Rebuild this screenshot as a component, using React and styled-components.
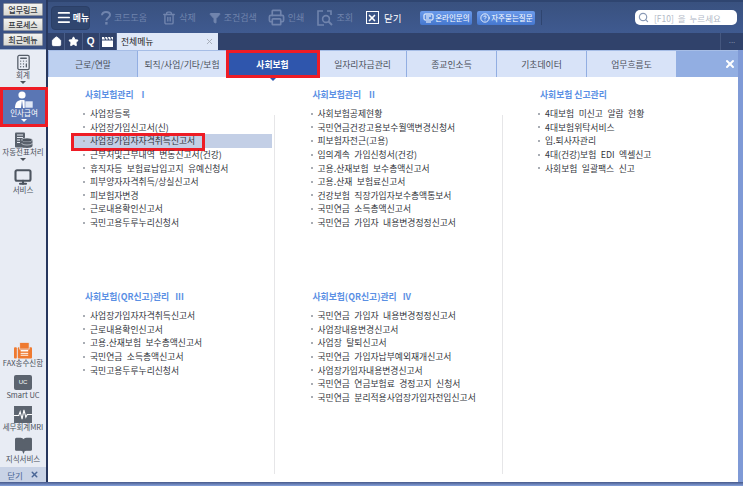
import React from "react";
import styled, { createGlobalStyle } from "styled-components";
import { Calculator, HelpCircle, Trash2, Filter, Printer, Search, X, Menu, Home, Star, Monitor, BookOpen } from "lucide-react";

const GlobalStyle = createGlobalStyle`
    html, body { margin: 0; padding: 0; background: #fff; }
    body { width: 743px; height: 486px; overflow: hidden; font-family: "Noto Sans CJK KR", "Noto Sans", sans-serif; }
`;

const groups = [
    [
        { title: "사회보험관리    I", items: ["사업장등록", "사업장가입신고서(신)", "사업장가입자자격취득신고서", "근부처및근부내역 변동신고서(건강)", "휴직자등 보험료납입고지 유예신청서", "피부양자자격취득/상실신고서", "피보험자변경", "근로내용확인신고서", "국민고용두루누리신청서"] },
        { title: "사회보험(QR신고)관리   III", items: ["사업장가입자자격취득신고서", "근로내용확인신고서", "고용.산재보험 보수총액신고서", "국민연금 소득총액신고서", "국민고용두루누리신청서"] },
    ],
    [
        { title: "사회보험관리    II", items: ["사회보험공제현황", "국민연금건강고용보수월액변경신청서", "피보험자전근(고용)", "임의계속 가입신청서(건강)", "고용.산재보험 보수총액신고서", "고용.산재 보험료신고서", "건강보험 직장가입자보수총액통보서", "국민연금 소득총액신고서", "국민연금 가입자 내용변경정정신고서"] },
        { title: "사회보험(QR신고)관리   IV", items: ["국민연금 가입자 내용변경정정신고서", "사업장내용변경신고서", "사업장 탈퇴신고서", "국민연금 가입자납부예외재개신고서", "사업장가입자내용변경신고서", "국민연금 연금보험료 경정고지 신청서", "국민연금 분리적용사업장가입자전입신고서"] },
    ],
    [
        { title: "사회보험 신고관리", items: ["4대보험 미신고 알람 현황", "4대보험위탁서비스", "입.퇴사자관리", "4대(건강)보험 EDI 엑셀신고", "사회보험 일괄팩스 신고"] },
    ],
];

const tabs = [
    { label: "근로/연말", w: 89, tone: "soft" },
    { label: "퇴직/사업/기타/보험", w: 89 },
    { label: "사회보험", w: 92, tone: "active" },
    { label: "일자리자금관리", w: 88 },
    { label: "종교인소득", w: 90 },
    { label: "기초데이터", w: 90 },
    { label: "업무흐름도", w: 90 },
];

function App() {
    return (
        <>
            <GlobalStyle />
            <Page>
                <Body>
                    <Side>
                        <QuickLinks>
                            <QuickButton>업무링크</QuickButton>
                            <QuickButton>프로세스</QuickButton>
                            <QuickButton>최근메뉴</QuickButton>
                        </QuickLinks>
                        <SideMenu>
                            <SideItem $gap={3}>
                                <Calculator size={17} strokeWidth={1.8} color="#555d68" />
                                <SideLabel>회계</SideLabel>
                                <Arrow />
                            </SideItem>
                            <SideItem $active $gap={5}>
                                <PersonIcon />
                                <SideLabel $active>인사급여</SideLabel>
                                <Arrow $active />
                            </SideItem>
                            <SideItem $gap={7}>
                                <LedgerIcon />
                                <SideLabel>자동전표처리</SideLabel>
                                <Arrow />
                            </SideItem>
                            <SideItem>
                                <Monitor size={18} strokeWidth={2.8} color="#4d5560" />
                                <SideLabel>서비스</SideLabel>
                            </SideItem>
                        </SideMenu>
                        <SideBottom>
                            <SideTool>
                                <FaxIcon />
                                <SideLabel>FAX송수신함</SideLabel>
                            </SideTool>
                            <SideTool>
                                <UcBadge>UC</UcBadge>
                                <SideLabel>Smart UC</SideLabel>
                            </SideTool>
                            <SideTool>
                                <MriIcon />
                                <SideLabel>세무회계MRI</SideLabel>
                            </SideTool>
                            <SideTool>
                                <BookOpen size={19} fill="#59616c" color="#59616c" strokeWidth={1.4} />
                                <SideLabel>지식서비스</SideLabel>
                            </SideTool>
                            <CloseBar>닫기 <X size={9} strokeWidth={4} color="#4a6696" /></CloseBar>
                        </SideBottom>
                    </Side>
                    <Main>
                        <Toolbar>
                            <MenuButton><Menu size={17} strokeWidth={2.6} color="#fff" />메뉴</MenuButton>
                            <ToolItem $ml={11}><QuestionIcon />코드도움</ToolItem>
                            <ToolItem $ml={15}><Trash2 size={14} strokeWidth={2.4} />삭제</ToolItem>
                            <ToolItem $ml={13}><Filter size={12} fill="#7084ad" />조건검색</ToolItem>
                            <ToolItem $ml={11}><Printer size={17} strokeWidth={2.4} />인쇄</ToolItem>
                            <ToolItem $ml={13}><LookupIcon />조회</ToolItem>
                            <CloseTool>
                                <CloseSquare><X size={10} strokeWidth={4} color="#fff" /></CloseSquare>
                                닫기
                            </CloseTool>
                            <LinkButton $ml={19} $w={52}><MonitorChat />온라인문의</LinkButton>
                            <LinkButton $ml={5} $w={58}><HelpCircle size={10} />자주묻는질문</LinkButton>
                            <ToolDivider />
                            <SearchBox><Search size={11} color="#8a9ab6" strokeWidth={2.6} />[F10] 을 누르세요</SearchBox>
                        </Toolbar>
                        <TabStrip>
                            <IconTab><Home size={11} fill="#fff" color="#fff" /></IconTab>
                            <IconTab><Star size={11} fill="#fff" color="#fff" /></IconTab>
                            <IconTab><QGlyph>Q</QGlyph></IconTab>
                            <IconTab><BoardIcon /></IconTab>
                            <OpenTab>전체메뉴<X size={9} strokeWidth={2.4} color="#a4aab6" /></OpenTab>
                            <More>...</More>
                        </TabStrip>
                        <MenuPanel>
                            <CategoryBar>
                                {tabs.map((t) => (
                                    <Category key={t.label} $w={t.w} $tone={t.tone}>{t.label}</Category>
                                ))}
                                <CategoryRest><X size={12} strokeWidth={4} color="#fff" /></CategoryRest>
                            </CategoryBar>
                            <Columns>
                                {groups.map((col, i) => (
                                    <Column key={i} $line={i < 2}>
                                        {col.map((g) => (
                                            <Group key={g.title}>
                                                <GroupTitle>{g.title}</GroupTitle>
                                                {g.items.map((item, n) => {
                                                    const selected = i === 0 && g.title.endsWith(" I") && n === 2;
                                                    return (
                                                        <Row key={item} $selected={selected}>
                                                            <Dot />
                                                            {item}
                                                            {selected && <RedMark />}
                                                        </Row>
                                                    );
                                                })}
                                            </Group>
                                        ))}
                                    </Column>
                                ))}
                            </Columns>
                        </MenuPanel>
                    </Main>
                </Body>
                <BottomEdge />
            </Page>
        </>
    );
}

function PersonIcon() {
    return (
        <svg width="20" height="18" viewBox="0 0 20 18">
            <circle cx="8" cy="4" r="3.6" fill="#fff" />
            <path d="M1 17c0-6 3-8 7-8s6 2 6 8z" fill="#fff" />
            <path d="M8 9l-1 8h2z" fill="#5a76b4" />
            <rect x="11" y="10" width="8" height="7" fill="#dfe7f6" stroke="#5a76b4" strokeWidth="0.6" />
        </svg>
    );
}

function LedgerIcon() {
    return (
        <svg width="19" height="16" viewBox="0 0 19 16">
            <rect x="1" y="0.5" width="10" height="15" rx="1" fill="#59616c" />
            <path d="M3 3h6M3 5.5h6M3 8h3M3 10.5h3" stroke="#e8ecf4" strokeWidth="1" />
            <ellipse cx="13" cy="8" rx="5.5" ry="2" fill="#4d5560" stroke="#e8ecf4" strokeWidth="0.6" />
            <path d="M7.5 8v6c0 1 2.5 2 5.5 2s5.5-1 5.5-2V8c0 1-2.5 2-5.5 2s-5.5-1-5.5-2z" fill="#59616c" />
            <path d="M7.5 11c0 1 2.5 2 5.5 2s5.5-1 5.5-2" fill="none" stroke="#e8ecf4" strokeWidth="0.6" />
        </svg>
    );
}

function FaxIcon() {
    return (
        <svg width="18" height="17" viewBox="0 0 19 17">
            <rect x="0" y="5" width="3" height="12" rx="1" fill="#ef7a30" />
            <rect x="4" y="5" width="15" height="12" rx="1" fill="#ef7a30" />
            <rect x="6" y="0" width="10" height="7" fill="#ef7a30" stroke="#e8ecf4" strokeWidth="0.8" />
            <rect x="7" y="8" width="8" height="1.5" fill="#fff" />
            <rect x="7" y="11" width="8" height="1" fill="#fff" />
            <rect x="7" y="13" width="8" height="1" fill="#fff" />
        </svg>
    );
}

function MriIcon() {
    return (
        <svg width="18" height="17" viewBox="0 0 19 18">
            <rect width="19" height="18" fill="#5c646f" />
            <path d="M0 10h5l1.5-4 2 8 2-10 2 8 1.5-3h5" fill="none" stroke="#fff" strokeWidth="1.1" />
        </svg>
    );
}

function QuestionIcon() {
    return (
        <svg width="10" height="14" viewBox="0 0 10 14">
            <path d="M1 4.2C1 2.2 2.7 1 5 1s4 1.3 4 3.1c0 2.6-3.6 2.6-3.6 5.4" fill="none" stroke="#7084ad" strokeWidth="2" />
            <rect x="4.2" y="11" width="2.4" height="2.6" fill="#7084ad" />
        </svg>
    );
}

function LookupIcon() {
    return (
        <svg width="16" height="16" viewBox="0 0 16 16" fill="none" stroke="#7084ad" strokeWidth="1.6">
            <path d="M6 1H1v14h6M10 1h4v4" />
            <circle cx="9" cy="9" r="3.4" />
            <path d="M11.5 11.5L15 15" strokeWidth="2" />
        </svg>
    );
}

function MonitorChat() {
    return (
        <svg width="11" height="10" viewBox="0 0 11 10" fill="none" stroke="#fff" strokeWidth="1">
            <rect x="1" y="1" width="9" height="6" rx="1" />
            <path d="M3 9h5M3 3h5M3 5h3" />
        </svg>
    );
}

function BoardIcon() {
    return (
        <svg width="11" height="10" viewBox="0 0 11 10" fill="#fff">
            <rect x="0" y="3.5" width="11" height="6.5" />
            <path d="M0 0h2l1 2.5H0zM3 0h2l1 2.5H4zM6 0h2l1 2.5H7zM9 0h2v2.5h-1z" />
        </svg>
    );
}

const Page = styled.div`
    display: flex;
    flex-direction: column;
    width: 743px;
    height: 486px;
    background: #fff;
    overflow: hidden;
`;

const Body = styled.div`
    display: flex;
    height: 482px;
    flex: none;
`;

const BottomEdge = styled.div`
    flex: 1;
    background: linear-gradient(#47598a, #86a2dc);
`;

const Side = styled.div`
    display: flex;
    flex-direction: column;
    width: 46px;
    flex: none;
    background: #e8ecf4;
    border-right: 2px solid #27375e;
`;

const QuickLinks = styled.div`
    display: flex;
    flex-direction: column;
    align-items: center;
    gap: 2px;
    height: 46px;
    padding-top: 3px;
    background: #3b5285;
    border-bottom: 1px solid #9fb0cc;
`;

const QuickButton = styled.div`
    width: 38px;
    height: 11px;
    font-size: 8px;
    font-weight: 500;
    line-height: 11px;
    text-align: center;
    white-space: nowrap;
    color: #33373e;
    background: linear-gradient(#f3f3f1, #d8d8d3);
    border: 1px solid #8d93a0;
    border-radius: 1px;
`;

const SideMenu = styled.div`
    display: flex;
    flex-direction: column;
    align-items: center;
    padding-top: 4px;
`;

const SideItem = styled.div`
    position: relative;
    z-index: 2;
    display: flex;
    flex-direction: column;
    align-items: center;
    flex: none;
    width: ${(p) => (p.$active ? "48px" : "46px")};
    height: ${(p) => (p.$active ? "40px" : "auto")};
    margin-bottom: ${(p) => p.$gap || 0}px;
    margin-right: ${(p) => (p.$active ? "-2px" : "0")};
    padding-top: ${(p) => (p.$active ? "4px" : "0")};
    box-sizing: border-box;
    background: ${(p) => (p.$active ? "#5a76b4" : "transparent")};
    outline: ${(p) => (p.$active ? "3px solid #ee1c25" : "none")};
    outline-offset: -3px;
`;

const SideLabel = styled.div`
    font-size: 7.5px;
    line-height: 8px;
    white-space: nowrap;
    color: ${(p) => (p.$active ? "#fff" : "#4c525c")};
`;

const Arrow = styled.div`
    width: 0;
    height: 0;
    margin-top: 2px;
    border-left: 3px solid transparent;
    border-right: 3px solid transparent;
    border-top: 3px solid ${(p) => (p.$active ? "#fff" : "#4c525c")};
`;

const SideBottom = styled.div`
    margin-top: auto;
    display: flex;
    flex-direction: column;
    align-items: center;
`;

const SideTool = styled.div`
    display: flex;
    flex-direction: column;
    align-items: center;
    justify-content: flex-end;
    height: 32px;
`;

const UcBadge = styled.div`
    width: 18px;
    height: 15px;
    margin-bottom: 1px;
    font: 6px/15px "Liberation Sans", sans-serif;
    text-align: center;
    color: #fff;
    background: #5c646f;
    border-radius: 2px;
`;

const CloseBar = styled.div`
    display: flex;
    align-items: center;
    justify-content: center;
    gap: 7px;
    width: 100%;
    height: 15px;
    margin-top: 4px;
    font-size: 8.5px;
    color: #4a6696;
    background: #c9d3e6;
`;

const Main = styled.div`
    display: flex;
    flex-direction: column;
    flex: 1;
    min-width: 0;
`;

const Toolbar = styled.div`
    display: flex;
    align-items: center;
    height: 33px;
    flex: none;
    padding: 0 6px 0 3px;
    box-sizing: border-box;
    background: linear-gradient(#39517f, #3f5a90);
    border-top: 2px solid #2f4570;
`;

const MenuButton = styled.div`
    display: flex;
    align-items: center;
    gap: 1px;
    width: 39px;
    height: 24px;
    padding-left: 4px;
    box-sizing: border-box;
    font-size: 8.8px;
    font-weight: 700;
    white-space: nowrap;
    color: #fff;
    background: #30466f;
    border: 1px solid #2b3f66;
    border-radius: 4px;
`;

const ToolItem = styled.div`
    display: flex;
    align-items: center;
    gap: 3px;
    margin-left: ${(p) => p.$ml}px;
    font-size: 9px;
    white-space: nowrap;
    color: #7084ad;
`;

const CloseTool = styled.div`
    display: flex;
    align-items: center;
    gap: 5px;
    margin-left: 13px;
    font-size: 9.5px;
    white-space: nowrap;
    color: #fff;
`;

const CloseSquare = styled.div`
    display: flex;
    align-items: center;
    justify-content: center;
    width: 11px;
    height: 11px;
    border: 1px solid #fff;
`;

const LinkButton = styled.div`
    display: flex;
    align-items: center;
    justify-content: center;
    gap: 1px;
    flex: none;
    width: ${(p) => p.$w}px;
    height: 14px;
    margin-left: ${(p) => p.$ml}px;
    font-size: 7.5px;
    white-space: nowrap;
    color: #fff;
    background: linear-gradient(#6b9aea, #4577cf);
    border-radius: 2px;
`;

const ToolDivider = styled.div`
    width: 1px;
    height: 15px;
    margin-left: 6px;
    background: #2f4570;
`;

const SearchBox = styled.div`
    display: flex;
    align-items: center;
    gap: 5px;
    width: 102px;
    height: 15px;
    margin-left: auto;
    padding-left: 3px;
    box-sizing: border-box;
    font-size: 8.5px;
    word-spacing: 2px;
    white-space: nowrap;
    color: #b2b9c6;
    background: #fff;
    border-radius: 5px;
`;

const TabStrip = styled.div`
    display: flex;
    align-items: stretch;
    height: 17px;
    flex: none;
    background: #30426b;
`;

const IconTab = styled.div`
    display: flex;
    align-items: center;
    justify-content: center;
    width: 17.25px;
    flex: none;
    border-right: 1px solid #4a5e88;
    box-sizing: border-box;
`;

const QGlyph = styled.span`
    font: 700 10px/1 "Liberation Sans", sans-serif;
    color: #fff;
`;

const OpenTab = styled.div`
    display: flex;
    align-items: center;
    justify-content: space-between;
    width: 101px;
    padding: 0 4px;
    box-sizing: border-box;
    font-size: 8.8px;
    white-space: nowrap;
    color: #222;
    background: #dfe8f8;
`;

const More = styled.div`
    margin-left: auto;
    width: 22px;
    font-size: 8px;
    line-height: 14px;
    text-align: center;
    color: #7c8aa8;
    border-left: 1px solid #45577f;
`;

const MenuPanel = styled.div`
    display: flex;
    flex-direction: column;
    flex: 1;
    min-height: 0;
    background: #fff;
    border-right: 5px solid #7f9ad6;
`;

const CategoryBar = styled.div`
    display: flex;
    height: 27px;
    flex: none;
    padding-left: 1px;
    background: #92aee2;
    border-top: 1px solid #a6bde6;
    box-sizing: border-box;
`;

const Category = styled.div`
    position: relative;
    display: flex;
    align-items: center;
    justify-content: center;
    width: ${(p) => p.$w}px;
    flex: none;
    box-sizing: border-box;
    font-size: 8.8px;
    white-space: nowrap;
    color: ${(p) => (p.$tone === "active" ? "#fff" : "#4a4f58")};
    font-weight: ${(p) => (p.$tone === "active" ? 700 : 400)};
    background: ${(p) => (p.$tone === "active" ? "#2f56ad" : p.$tone === "soft" ? "#bdd0f0" : "#d8e3f8")};
    border-right: 1px solid #92aee2;
    outline: ${(p) => (p.$tone === "active" ? "3px solid #ee1c25" : "none")};
    outline-offset: -2px;
    z-index: ${(p) => (p.$tone === "active" ? 1 : 0)};

    &::after {
        content: ${(p) => (p.$tone === "active" ? '""' : "none")};
        position: absolute;
        left: 50%;
        bottom: -4px;
        margin-left: -3px;
        border-left: 3px solid transparent;
        border-right: 3px solid transparent;
        border-top: 3px solid #2f56ad;
    }
`;

const CategoryRest = styled.div`
    flex: 1;
    display: flex;
    align-items: center;
    justify-content: flex-end;
    padding-right: 2px;
`;

const Columns = styled.div`
    display: flex;
    flex: 1;
    padding-left: 24px;
    min-height: 0;
`;

const Column = styled.div`
    position: relative;
    width: 227.5px;
    flex: none;

    &::after {
        content: ${(p) => (p.$line ? '""' : "none")};
        position: absolute;
        left: 202px;
        top: 38px;
        bottom: 8px;
        width: 1px;
        background: #e6e6e8;
    }
`;

const Group = styled.div`
    height: 202px;
    padding-top: 11px;
    box-sizing: border-box;
`;

const GroupTitle = styled.div`
    height: 19px;
    margin-left: 13px;
    font-size: 8.8px;
    font-weight: 700;
    line-height: 14px;
    white-space: pre;
    color: #5b90e4;
`;

const Row = styled.div`
    position: relative;
    display: flex;
    align-items: center;
    width: 200px;
    height: 13.6px;
    padding-left: 11px;
    box-sizing: border-box;
    font-size: 8.8px;
    word-spacing: 2.5px;
    white-space: pre;
    color: #33363c;
    background: ${(p) => (p.$selected ? "#c3cfe6" : "transparent")};
`;

const Dot = styled.span`
    width: 2px;
    height: 2px;
    flex: none;
    margin-right: 5px;
    background: #a9adb4;
`;

const RedMark = styled.span`
    position: absolute;
    left: -1px;
    top: -1px;
    width: 134px;
    height: 18px;
    box-sizing: border-box;
    border: 3px solid #ee1c25;
`;

export default App;
